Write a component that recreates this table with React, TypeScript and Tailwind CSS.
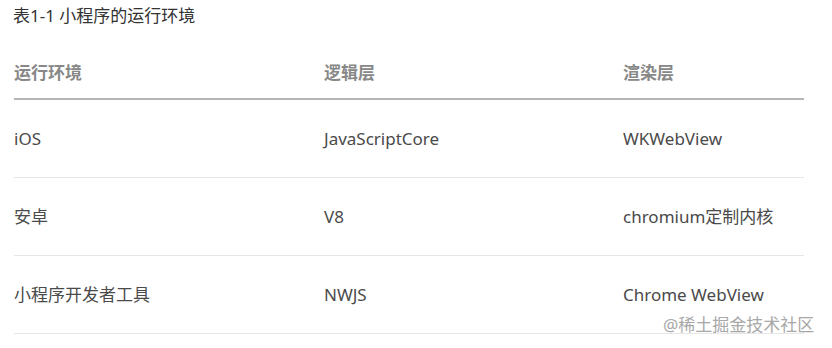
import React from "react";

const rows = [
  ["iOS", "JavaScriptCore", "WKWebView"],
  ["安卓", "V8", "chromium定制内核"],
  ["小程序开发者工具", "NWJS", "Chrome WebView"],
];

export default function App() {
  const font = { fontFamily: '"Noto Sans", "Noto Sans CJK SC", sans-serif' };
  return (
    <div className="relative w-[832px] h-[348px] bg-white overflow-hidden" style={font}>
      <div className="pl-[13px] h-[31px] flex items-center text-[17px] text-[#333]">表1-1 小程序的运行环境</div>
      <div className="ml-[14px] mt-[16px] w-[790px]">
        <div className="grid grid-cols-[310px_299px_181px] h-[53px] items-center border-b-2 border-[#b5b5b5] text-[17px] font-bold text-[#888]">
          <div>运行环境</div>
          <div>逻辑层</div>
          <div>渲染层</div>
        </div>
        {rows.map((r, i) => (
          <div
            key={i}
            className="grid grid-cols-[310px_299px_181px] h-[78px] items-center border-b border-[#e6e6e6] text-[17px] text-[#4a4a4a]"
          >
            <div>{r[0]}</div>
            <div>{r[1]}</div>
            <div>{r[2]}</div>
          </div>
        ))}
      </div>
      <div className="absolute left-[663px] top-[312px] text-[17px] text-[#a8a8a8]">@稀土掘金技术社区</div>
    </div>
  );
}
